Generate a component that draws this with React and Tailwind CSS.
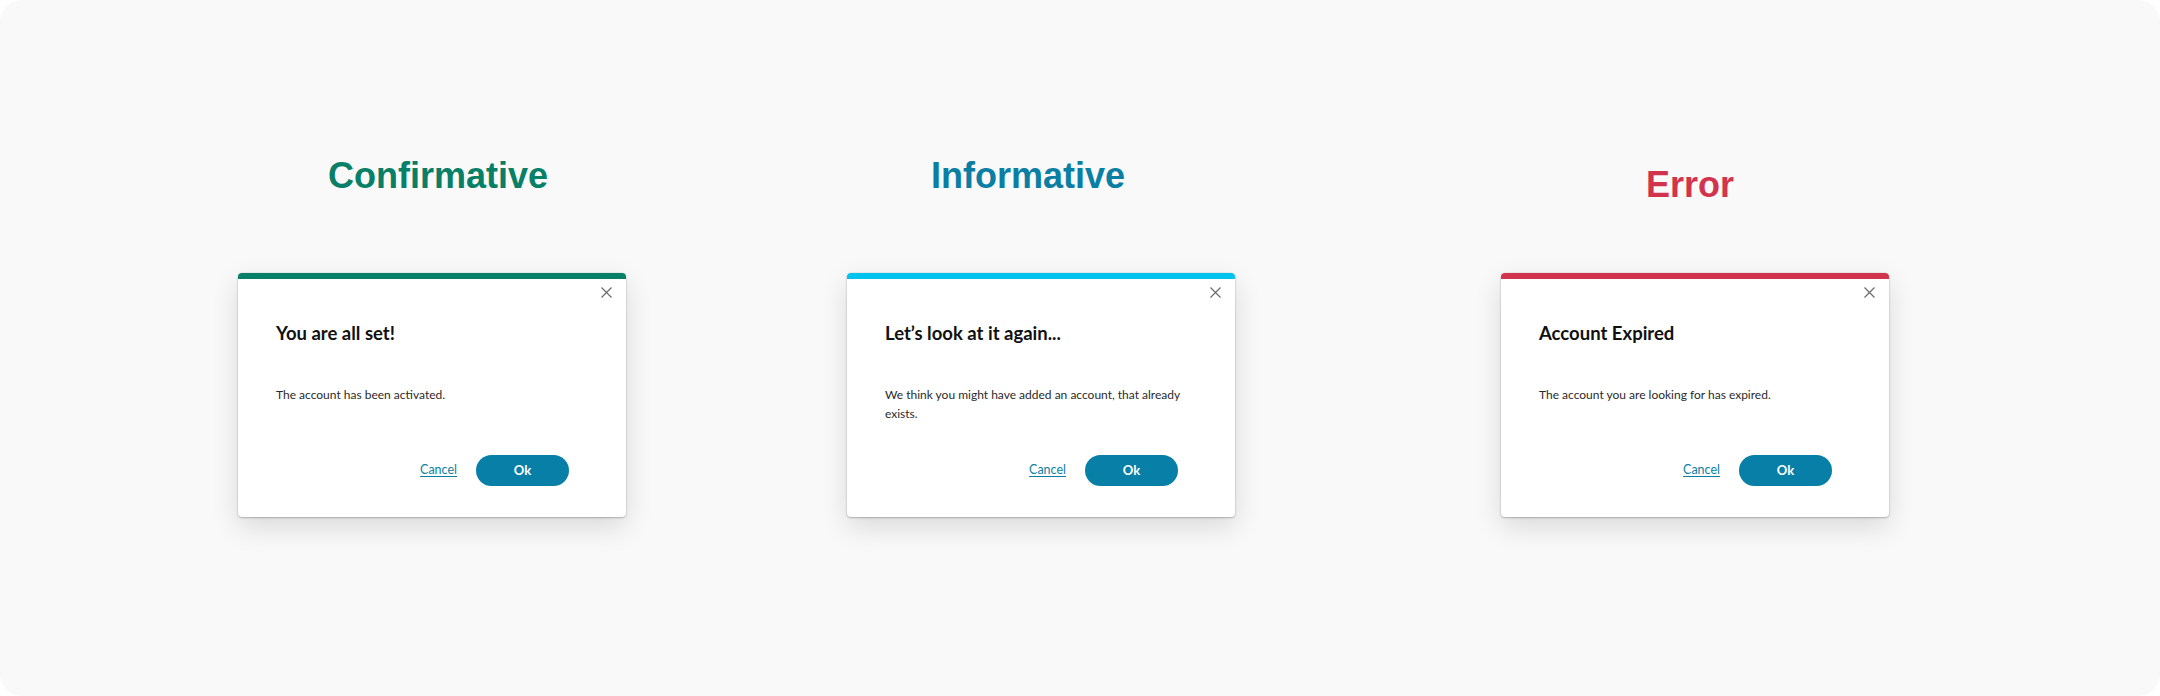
const dialogs = [
  {
    key: "confirm",
    heading: "Confirmative",
    headingClass: "text-[#087f67] ml-[90px] mt-[158px]",
    bar: "bg-[#087f67]",
    colClass: "ml-[238px]",
    title: "You are all set!",
    body: "The account has been activated.",
  },
  {
    key: "info",
    heading: "Informative",
    headingClass: "text-[#0b7fa3] ml-[84px] mt-[158px]",
    bar: "bg-[#00c2ef]",
    colClass: "ml-[221px]",
    title: "Let\u2019s look at it again...",
    body: "We think you might have added an account, that already exists.",
  },
  {
    key: "error",
    heading: "Error",
    headingClass: "text-[#d3344d] ml-[145px] mt-[167px]",
    bar: "bg-[#d3344d]",
    colClass: "ml-[266px]",
    title: "Account Expired",
    body: "The account you are looking for has expired.",
  },
];

function CloseIcon() {
  return (
    <svg width="11" height="11" viewBox="0 0 11 11" fill="none">
      <path d="M0.5 0.5L10.5 10.5M10.5 0.5L0.5 10.5" stroke="#6b6b6b" strokeWidth="1.2" />
    </svg>
  );
}

function Dialog({ item }) {
  return (
    <div className="flex h-[244px] w-[388px] flex-col overflow-hidden rounded-[4px] bg-white shadow-[0_0_0_1px_rgba(0,0,0,0.04),0_1px_2px_rgba(0,0,0,0.22),0_10px_28px_rgba(0,0,0,0.13)]">
      <div className={`h-[6px] w-full ${item.bar}`} />
      <div className="flex justify-end pr-[14px] pt-[8px]">
        <CloseIcon />
      </div>
      <div className="px-[38px]">
        <h3 className="mt-[23px] text-[18.5px] font-bold leading-6 text-[#111]">
          {item.title}
        </h3>
        <p className="mt-[40px] text-[12px] leading-[19px] text-[#2a2a2a]">
          {item.body}
        </p>
      </div>
      <div className="mt-auto mb-[31px] mr-[57px] flex items-center justify-end gap-[19px]">
        <button type="button" className="text-[12.5px] text-[#0b7fa3] underline underline-offset-2">
          Cancel
        </button>
        <button
          type="button"
          className="flex h-[31px] w-[93px] items-center justify-center rounded-full bg-[#087fa6] text-[13px] font-bold text-white"
        >
          Ok
        </button>
      </div>
    </div>
  );
}

export default function App() {
  return (
    <div className="h-[696px] w-[2160px] bg-white" style={{ fontFamily: "Lato, 'Noto Sans', sans-serif" }}>
      <div className="flex h-full w-full items-start rounded-[22px] bg-[#f9f9f9]">
        {dialogs.map((item) => (
          <div key={item.key} className={`flex flex-col ${item.colClass}`}>
            <h2
              className={`h-[36px] text-[36px] font-bold leading-none ${item.headingClass}`}
              style={{ fontFamily: "'Liberation Sans', Arial, sans-serif" }}
            >
              {item.heading}
            </h2>
            <div className={item.key === "error" ? "mt-[70px]" : "mt-[79px]"}>
              <Dialog item={item} />
            </div>
          </div>
        ))}
      </div>
    </div>
  );
}
